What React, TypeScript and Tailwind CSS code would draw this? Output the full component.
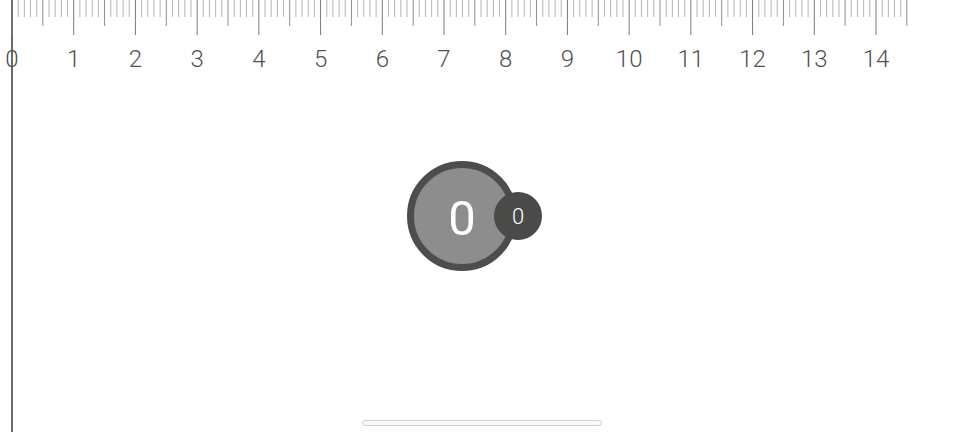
const UNIT = 61.714;
const ORIGIN = 12;

function Ruler() {
  const ticks = [];
  for (let i = 0; i <= 145; i++) {
    const x = ORIGIN + (i * UNIT) / 10;
    const major = i % 10 === 0;
    const half = i % 5 === 0 && !major;
    const len = major ? 35 : half ? 26 : 17;
    const color = major ? '#7a7a7a' : half ? '#8e8e8e' : '#b4b4b4';
    ticks.push(<line key={i} x1={x} x2={x} y1={0} y2={len} stroke={color} strokeWidth={1} />);
  }
  const labels = [];
  for (let n = 0; n <= 14; n++) {
    labels.push(
      <text
        key={n}
        x={ORIGIN + n * UNIT}
        y={67}
        textAnchor="middle"
        fontSize={24}
        fontWeight={300}
        fill="#505050"
        style={{ fontFamily: 'Roboto, "Noto Sans", sans-serif' }}
      >
        {n}
      </text>
    );
  }
  return (
    <svg width={964} height={80} className="block -ml-[13px] overflow-visible">
      {ticks}
      {labels}
    </svg>
  );
}

export default function App() {
  return (
    <div className="w-[964px] h-[432px] bg-white pl-[11px] overflow-hidden font-['Roboto','Noto_Sans',sans-serif]">
      <div className="h-full border-l-2 border-[#6a6a6a] flex flex-col">
        <Ruler />
        <div className="flex items-center mt-[81px] pl-[394px]">
          <div className="w-[110px] h-[110px] rounded-full border-[7px] border-[#4d4d4d] bg-[#8d8d8d] flex items-center justify-center">
            <span className="text-[49px] font-normal text-white leading-none mt-[4px]">0</span>
          </div>
          <div className="-ml-[23px] w-[48px] h-[48px] rounded-full bg-[#4a4b48] flex items-center justify-center">
            <span className="text-[22px] font-light text-white leading-none mt-[2px]">0</span>
          </div>
        </div>
        <div className="mt-auto mb-[6px] ml-[349px] w-[240px] h-[6px] rounded-full border border-[#cfcfcf] bg-[#fafafa]" />
      </div>
    </div>
  );
}
